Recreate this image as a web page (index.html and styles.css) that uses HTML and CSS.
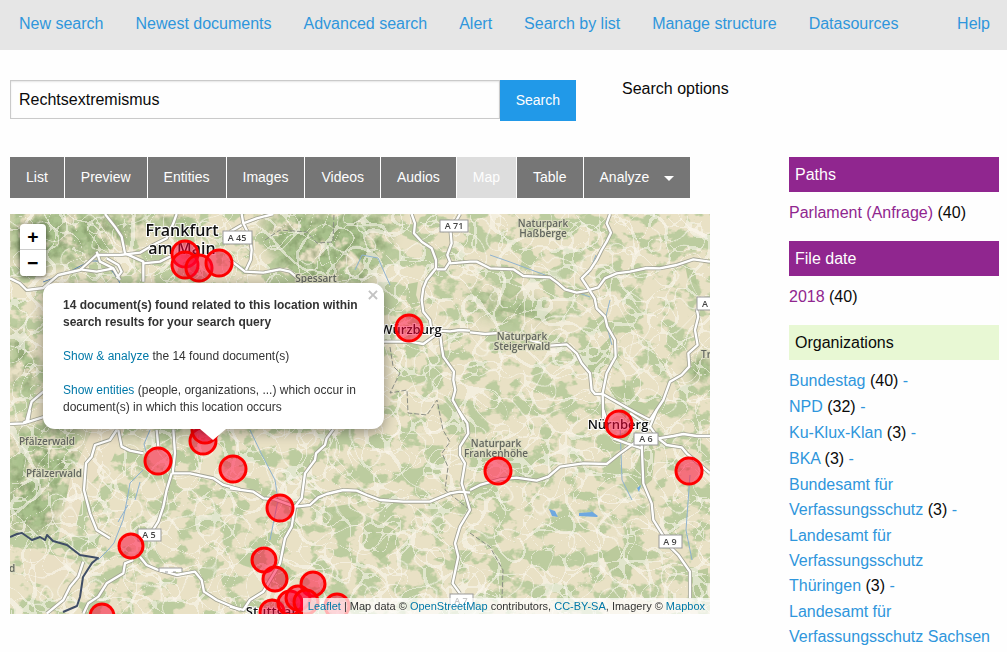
FILE: index.html
```html
<!DOCTYPE html>
<html lang="en">
<head>
<meta charset="utf-8">
<title>Search: Rechtsextremismus</title>
<link rel="stylesheet" href="styles.css">
</head>
<body>
<nav class="topbar">
  <a href="#">New search</a>
  <a href="#">Newest documents</a>
  <a href="#">Advanced search</a>
  <a href="#">Alert</a>
  <a href="#">Search by list</a>
  <a href="#">Manage structure</a>
  <a href="#">Datasources</a>
  <a href="#" class="help">Help</a>
</nav>

<div class="search-row">
  <form class="search-form">
    <input type="text" class="query" aria-label="Search query" value="Rechtsextremismus">
    <button type="button" class="submit">Search</button>
  </form>
  <div class="options">Search options</div>
</div>

<div class="content">
  <main class="results">
    <div class="tabs">
      <button type="button">List</button>
      <button type="button">Preview</button>
      <button type="button">Entities</button>
      <button type="button">Images</button>
      <button type="button">Videos</button>
      <button type="button">Audios</button>
      <button type="button" class="active">Map</button>
      <button type="button">Table</button>
      <button type="button" class="dropdown">Analyze</button>
    </div>

    <div class="map">
      <svg class="tiles" viewBox="10 214 700 400" preserveAspectRatio="xMinYMin slice" role="img" aria-label="Map">
        <defs>
          <filter id="woods" x="0" y="0" width="100%" height="100%" color-interpolation-filters="sRGB">
            <feTurbulence type="fractalNoise" baseFrequency="0.045 0.06" numOctaves="4" seed="12"/>
            <feColorMatrix values="0 0 0 0 .71  0 0 0 0 .79  0 0 0 0 .60  11 0 0 0 -5.4"/>
          </filter>
          <filter id="dense" x="0" y="0" width="100%" height="100%" color-interpolation-filters="sRGB">
            <feTurbulence type="fractalNoise" baseFrequency="0.05" numOctaves="4" seed="5" result="t"/>
            <feColorMatrix in="t" values="0 0 0 0 .66  0 0 0 0 .755  0 0 0 0 .55  8 0 0 0 -3" result="n"/>
            <feGaussianBlur in="SourceGraphic" stdDeviation="7" result="b"/>
            <feComposite in="n" in2="b" operator="in"/>
          </filter>
          <filter id="lanes" x="0" y="0" width="100%" height="100%" color-interpolation-filters="sRGB">
            <feTurbulence type="turbulence" baseFrequency="0.03" numOctaves="1" seed="8"/>
            <feColorMatrix values="0 0 0 0 .98  0 0 0 0 .97  0 0 0 0 .93  -38 0 0 0 1"/>
          </filter>
          <filter id="lanes2" x="0" y="0" width="100%" height="100%" color-interpolation-filters="sRGB">
            <feTurbulence type="turbulence" baseFrequency="0.04" numOctaves="1" seed="31"/>
            <feColorMatrix values="0 0 0 0 .98  0 0 0 0 .97  0 0 0 0 .93  0 -34 0 0 1"/>
          </filter>
          <filter id="relief" x="0" y="0" width="100%" height="100%" color-interpolation-filters="sRGB">
            <feTurbulence type="fractalNoise" baseFrequency="0.12" numOctaves="3" seed="3"/>
            <feColorMatrix values="0 0 0 0 .38  0 0 0 0 .46  0 0 0 0 .28  0 0 1 0 -.4" result="n"/>
            <feGaussianBlur in="SourceGraphic" stdDeviation="6" result="b"/>
            <feComposite in="n" in2="b" operator="in"/>
          </filter>
          <g id="hills">
            <path d="M10 214H195L180 230 150 228 120 245 85 260 40 266 10 255Z"/>
            <path d="M265 214H395L385 250 365 283H290L265 240Z"/>
            <path d="M10 430H85L75 470 60 505 50 535 10 530Z"/>
            <path d="M10 330H20L40 360 30 400 10 380Z"/>
            <path d="M120 425H200L190 450 120 440Z" opacity=".3"/>
            <path d="M470 285L540 300 560 325 480 318Z" opacity=".6"/>
            <path d="M690 355H710V385L690 380Z"/>
          </g>
          <g id="forests">
            <path d="M501 282L512 279 522 285 520 292 510 299 502 294Z"/>
            <path d="M498 300L515 303 530 308 548 312 556 318 545 322 520 315 500 310Z"/>
            <path d="M408 284L418 282 416 295 420 305 412 308 406 300Z"/>
            <path d="M610 387L630 386 633 396 625 408 612 402Z"/>
            <path d="M646 430L655 452 652 480 640 490 632 476 640 455Z"/>
            <path d="M596 352L611 336 609 362 594 375 588 366Z"/>
            <path d="M602 555L618 545 633 558 630 580 612 575Z"/>
            <path d="M692 572L708 568 708 598 694 600Z"/>
            <path d="M60 545L100 534 97 548 65 552Z"/>
            <path d="M685 265L695 270 697 285 688 280Z"/>
            <path d="M365 515L395 530 400 545 380 560 362 545Z"/>
            <path d="M325 508L350 504 362 515 340 530 322 524Z"/>
          </g>
          <g id="roads">
            <g transform="translate(0 200) scale(.3333)">
              <path d="M30 235L60 250 80 270 130 264 175 225 240 210 290 165 360 165 420 158 450 140 500 115 520 70 530 42"/>
              <path d="M315 42L345 80 365 110 375 160 430 185 430 245"/>
              <path d="M290 155L300 185 340 205 360 240M240 208L290 215 340 205"/>
              <path d="M430 190L480 185 520 165M320 175L355 195 365 215 350 235"/>
              <path d="M130 575L95 605 80 660"/>
            </g>
            <g transform="translate(230 200) scale(.3333)">
              <path d="M0 180L45 215 100 218 150 208 180 215 215 245M35 42L40 70 60 110 65 150 62 180 48 210M40 70L80 55 130 42M0 95L35 75"/>
              <path d="M545 42L555 70 552 100 575 125 605 145 618 180 618 205 590 240 580 265 575 300 580 335 600 360 605 395 630 390"/>
              <path d="M690 42L680 60 660 75 665 130 652 165 660 185 645 208 620 208M660 190L720 185"/>
              <path d="M462 425L540 425 580 432 610 410 630 392 660 394 690 390 720 392"/>
              <path d="M630 400L635 440 640 470 672 515 670 540 676 570 668 600 685 630 700 660"/>
            </g>
            <g transform="translate(470 200) scale(.3333)">
              <path d="M0 185L20 185 60 205 130 208 160 228 240 232 262 248 285 268 320 278 355 272"/>
              <path d="M420 42L410 70 423 98 410 125 395 150 380 180 360 210 335 235 358 270 374 295 380 325 405 350 412 380 435 420 437 470 410 520 398 580 400 660"/>
              <path d="M358 270L385 262 405 235 440 220 480 215 530 204 570 205 620 195 670 178 720 185"/>
              <path d="M0 397L45 402 100 398 240 437 290 433 320 460 335 490 360 520 365 570 375 582 398 582 420 595 500 640 540 660"/>
              <path d="M680 325L685 350 675 390 683 435 655 460 658 500 635 525 600 545 580 600 540 660"/>
            </g>
            <g transform="translate(0 410) scale(.3333)">
              <path d="M30 42L70 40 135 20M90 0L85 30 70 38M350 60L330 90 285 105 275 140 258 160 252 240 270 310 290 360 330 385M355 60L365 110 390 122 430 130"/>
              <path d="M520 58L525 130 518 190 570 190 640 205 670 225 720 238M515 190L500 240 490 290 475 335 440 390M470 60L475 110"/>
              <path d="M420 440L440 465 470 478 530 495 585 485 605 510 612 545 650 570 720 600M400 450L375 460 370 490 320 520 295 560 265 580 250 611M250 455L235 500 210 530 190 570 140 611"/>
            </g>
            <g transform="translate(230 410) scale(.3333)">
              <path d="M310 58L290 85 285 105 258 130 255 150 225 190 215 265 195 290 185 350 165 385 150 460 100 545 60 570 40 600 0 590"/>
              <path d="M0 235L70 245 100 265 135 268 195 290 240 285 265 262 290 252 340 240 380 242 410 255 450 270 520 275 600 275 660 250 690 245 720 248"/>
              <path d="M685 0L712 40 715 70 690 110 690 135 705 160 695 220 708 260 720 300 690 350 675 400 685 440 668 520 690 550"/>
            </g>
            <g transform="translate(470 410) scale(.3333)">
              <path d="M0 240L30 225 90 208 140 203 200 212 235 200 270 170 340 160 410 162 450 130 495 98 540 50 560 0"/>
              <path d="M430 85L470 100 515 115M515 100L520 220 545 280 550 330 600 410 625 435 660 485 660 565M400 0L410 30M480 10L540 50 565 85 610 78 640 72 680 78 720 78M565 85L590 105 635 112 650 130 720 190"/>
            </g>
          </g>
        </defs>

        <rect class="land" x="10" y="214" width="700" height="400"/>
        <rect x="10" y="214" width="700" height="400" filter="url(#woods)" opacity=".85"/>
        <use href="#forests" class="forests"/>
        <use href="#hills" filter="url(#dense)"/>
        <use href="#hills" filter="url(#relief)"/>
        <path class="plain" d="M92 430L125 428 112 460 85 490 75 530 58 540 70 480ZM30 550L75 560 60 590 25 580Z"/>
        <rect x="10" y="214" width="700" height="400" filter="url(#lanes)" opacity=".6"/>
        <rect x="10" y="214" width="700" height="400" filter="url(#lanes2)" opacity=".6"/>

        <path class="stream" d="M98 560L108 550 114 543 123 520 127 500 130 483 143 470M147 455L144 444 150 430M355 270L362 255 378 258 390 285M250 430L262 455 275 480 278 500 270 540M490 255L510 262 545 275 560 286 590 297M588 275L596 255M610 300L605 320 612 345M620 425L622 480 632 500M690 475L686 530 692 560M128 505L118 522M135 500L140 482"/>
        <path class="river" d="M43 282L67 273 90 261 100 261 113 272 120 283"/>
        <path class="frontier" d="M265 240L280 230 307 232 317 243 333 242 334 214M390 347L393 366 400 373 390 393 407 390 408 413 427 415 437 400 443 430 450 442 442 453 448 467 445 490 470 510M470 533L490 547 503 570 502 598"/>
        <path class="rhine" d="M10 537L17 534 22 533 32 540 40 537 45 540 47 535 53 541 67 545 80 555 98 558 92 563 83 577 80 597 77 606 63 612"/>
        <path class="lake" d="M549 509L555 511 558 517 552 516ZM579 513L592 512 586 507 598 516 597 517 579 516ZM637 488L641 485 639 492Z"/>

        <use href="#roads" class="road-casing"/>
        <use href="#roads" class="road-line"/>

        <g class="shield">
          <rect x="223" y="231" width="29" height="13"/><text x="237" y="241">A 45</text>
          <rect x="440" y="220" width="28" height="12"/><text x="454" y="229">A 71</text>
          <rect x="697" y="297" width="28" height="13"/><text x="705" y="307">A</text>
          <rect x="634" y="433" width="24" height="12"/><text x="646" y="442">A 6</text>
          <rect x="659" y="535" width="23" height="13"/><text x="670" y="545">A 9</text>
          <rect x="138" y="529" width="23" height="12"/><text x="149" y="538">A 5</text>
          <rect x="450" y="594" width="23" height="13"/><text x="461" y="604">A 7</text>
          <path d="M159 572V568H182V572M165 572H168M173 572H176"/>
        </g>

        <g class="region">
          <text x="543" y="227">Naturpark</text><text x="543" y="237">Haßberge</text>
          <text x="522" y="340">Naturpark</text><text x="522" y="350">Steigerwald</text>
          <text x="496" y="447">Naturpark</text><text x="496" y="457">Frankenhöhe</text>
          <text x="316" y="282">Spessart</text>
          <text x="47" y="445">Pfälzerwald</text>
          <text x="54" y="477">Pfälzerwald</text>
          <text x="12" y="572">d</text>
          <text x="706" y="358">Tr</text>
        </g>
        <g class="city">
          <text x="182" y="236">Frankfurt</text><text x="182" y="254">am Main</text>
          <g class="town">
            <text x="411" y="334">Würzburg</text>
            <text x="618" y="429">Nürnberg</text>
            <text x="274" y="616">Stuttgart</text>
          </g>
        </g>

        <g class="markers">
          <circle cx="185" cy="254" r="13"/><circle cx="185" cy="265" r="13"/>
          <circle cx="199" cy="268" r="13"/><circle cx="219" cy="263" r="13"/>
          <circle cx="409" cy="328" r="13"/><circle cx="619" cy="424" r="13"/>
          <circle cx="158" cy="461" r="13"/><circle cx="203" cy="441" r="13"/>
          <circle cx="205" cy="430" r="13"/><circle cx="233" cy="469" r="13"/>
          <circle cx="280" cy="508" r="13"/><circle cx="498" cy="471" r="13"/>
          <circle cx="689" cy="471" r="13"/><circle cx="131" cy="546" r="12"/>
          <circle cx="102" cy="616" r="12"/><circle cx="264" cy="560" r="12"/>
          <circle cx="275" cy="579" r="12"/><circle cx="313" cy="584" r="12"/>
          <circle cx="272" cy="612" r="12"/><circle cx="290" cy="603" r="12"/>
          <circle cx="298" cy="598" r="12"/><circle cx="306" cy="602" r="12"/>
          <circle cx="337" cy="606" r="12"/>
        </g>
      </svg>

      <div class="zoom">
        <button type="button" aria-label="Zoom in">+</button>
        <button type="button" aria-label="Zoom out">−</button>
      </div>

      <div class="popup">
        <button type="button" class="close" aria-label="Close">×</button>
        <p><strong>14 document(s) found related to this location within search results for your search query</strong></p>
        <p><a href="#">Show &amp; analyze</a> the 14 found document(s)</p>
        <p><a href="#">Show entities</a> (people, organizations, ...) which occur in document(s) in which this location occurs</p>
      </div>

      <div class="attribution"><a href="#">Leaflet</a> | Map data © <a href="#">OpenStreetMap</a> contributors, <a href="#">CC-BY-SA</a>, Imagery © <a href="#">Mapbox</a></div>
    </div>
  </main>

  <aside class="facets">
    <section class="facet file">
      <h2>Paths</h2>
      <ul><li><a href="#">Parlament (Anfrage)</a> (40)</li></ul>
    </section>
    <section class="facet file">
      <h2>File date</h2>
      <ul><li><a href="#">2018</a> (40)</li></ul>
    </section>
    <section class="facet">
      <h2>Organizations</h2>
      <ul>
        <li><a href="#">Bundestag</a> (40) <a href="#">-</a></li>
        <li><a href="#">NPD</a> (32) <a href="#">-</a></li>
        <li><a href="#">Ku-Klux-Klan</a> (3) <a href="#">-</a></li>
        <li><a href="#">BKA</a> (3) <a href="#">-</a></li>
        <li><a href="#">Bundesamt für Verfassungsschutz</a> (3) <a href="#">-</a></li>
        <li><a href="#">Landesamt für Verfassungsschutz Thüringen</a> (3) <a href="#">-</a></li>
        <li><a href="#">Landesamt für Verfassungsschutz Sachsen</a></li>
      </ul>
    </section>
  </aside>
</div>
</body>
</html>
```
FILE: styles.css
```css
* {
  box-sizing: border-box;
}

body {
  margin: 0;
  background: #fefefe;
  color: #0a0a0a;
  font: 16px/25px "Liberation Sans", Arial, sans-serif;
}

a {
  color: #2f96dc;
  text-decoration: none;
}

button,
input {
  margin: 0;
  border: 0;
  border-radius: 0;
  font-family: inherit;
}

.topbar {
  display: flex;
  gap: 32px;
  height: 50px;
  padding: 11px 17px 0 19px;
  background: #e6e6e6;
  white-space: nowrap;
}

.help {
  margin-left: auto;
}

.search-row {
  display: grid;
  grid-template-columns: 566fr 377fr;
  gap: 46px;
  padding: 30px 8px 0 10px;
}

.search-form {
  display: flex;
  align-items: flex-start;
}

.query {
  flex: 1;
  min-width: 0;
  height: 39px;
  padding: 0 8px;
  border: 1px solid #cacaca;
  background: #fefefe;
  box-shadow: inset 0 1px 2px rgba(10, 10, 10, 0.1);
  color: #0a0a0a;
  font-size: 16px;
}

.submit {
  height: 41px;
  padding: 0 16px 1px;
  background: #2199e8;
  color: #fefefe;
  font-size: 14px;
}

.options {
  line-height: 18px;
}

.content {
  display: flex;
  gap: 79px;
  padding: 36px 8px 0 10px;
}

.results {
  flex: 1;
  min-width: 0;
}

.tabs {
  display: flex;
  gap: 1px;
  margin-bottom: 16px;
}

.tabs button {
  height: 41px;
  padding: 0 16px 1px;
  background: #767676;
  color: #fefefe;
  font-size: 14px;
}

.tabs .active {
  background: #ddd;
}

.tabs .dropdown {
  display: flex;
  align-items: center;
  gap: 15px;
}

.dropdown::after {
  content: "";
  margin-top: 2px;
  border: 5px solid transparent;
  border-top-color: #fefefe;
  border-bottom: 0;
}

.map {
  position: relative;
  height: 400px;
  overflow: hidden;
  background: #ddd;
  font-size: 12px;
  line-height: 17px;
}

.map a {
  color: #0078a8;
}

.tiles {
  display: block;
  width: 100%;
  height: 100%;
}

.land {
  fill: #e9e1c5;
}

.plain {
  fill: #e9dfc4;
}

.forests {
  fill: #b3c796;
  opacity: 0.85;
}

.road-casing,
.road-line,
.stream,
.river,
.frontier,
.rhine {
  fill: none;
  stroke-linejoin: round;
}

.road-casing {
  stroke: #a3a394;
  stroke-width: 12px;
}

.road-line {
  stroke: #fff;
  stroke-width: 7px;
}

.stream {
  stroke: #8fb2cf;
  stroke-width: 1px;
}

.river {
  stroke: #5c82b3;
  stroke-width: 1px;
}

.frontier {
  stroke: #8b8e85;
  stroke-width: 1px;
  stroke-dasharray: 5 2;
}

.rhine {
  stroke: #3f4d66;
  stroke-width: 2px;
}

.lake {
  fill: #6ea8e0;
}

.shield {
  fill: #fff;
  stroke: #999;
}

.shield text {
  fill: #444;
  stroke: none;
  font: 600 9px "Open Sans", sans-serif;
  text-anchor: middle;
}

.region {
  fill: #62665f;
  stroke: #dcdcc0;
  stroke-width: 2px;
  paint-order: stroke;
  font: 600 10px "Open Sans", sans-serif;
  text-anchor: middle;
}

.city {
  fill: #111;
  stroke: #fff;
  stroke-width: 2px;
  paint-order: stroke;
  font: 600 16px "Open Sans", sans-serif;
  text-anchor: middle;
}

.town {
  font-size: 13px;
}

.markers {
  fill: #f03;
  fill-opacity: 0.5;
  stroke: #f00;
  stroke-width: 3px;
}

.zoom {
  position: absolute;
  top: 10px;
  left: 10px;
  width: 26px;
  overflow: hidden;
  border-radius: 4px;
  box-shadow: 0 1px 5px rgba(0, 0, 0, 0.65);
}

.zoom button {
  display: block;
  width: 26px;
  height: 26px;
  padding: 0;
  background: #fff;
  color: #000;
  font: bold 18px/26px "DejaVu Sans Mono", monospace;
}

.zoom button:first-child {
  border-bottom: 1px solid #ccc;
}

.popup {
  position: absolute;
  top: 69px;
  left: 33px;
  width: 341px;
  padding: 14px 20px 13px;
  border-radius: 12px;
  background: #fff;
  box-shadow: 0 3px 14px rgba(0, 0, 0, 0.4);
  color: #333;
}

.popup::after {
  content: "";
  position: absolute;
  top: 100%;
  left: 157px;
  border: 13px solid transparent;
  border-top: 11px solid #fff;
  border-bottom: 0;
}

.popup p {
  margin: 0 0 17px;
}

.popup p:last-child {
  margin: 0;
}

.close {
  position: absolute;
  top: 4px;
  right: 2px;
  width: 18px;
  height: 16px;
  padding: 0;
  background: none;
  color: #c3c3c3;
  font: bold 16px/16px "DejaVu Sans", sans-serif;
}

.attribution {
  position: absolute;
  right: 0;
  bottom: 0;
  padding: 0 5px;
  background: rgba(255, 255, 255, 0.7);
  color: #333;
  font-size: 11px;
  line-height: 16px;
}

.facets {
  flex: 0 0 210px;
}

.facet {
  margin-bottom: 16px;
}

.facet h2 {
  margin: 0 0 8px;
  padding: 5px 6px;
  background: #e8f8d4;
  font-size: 16px;
  font-weight: 400;
}

.facet ul {
  display: grid;
  gap: 1px;
  margin: 0;
  padding: 0;
  list-style: none;
}

.file h2 {
  background: #90268f;
  color: #fefefe;
}

.file a {
  color: #90268f;
}
```
